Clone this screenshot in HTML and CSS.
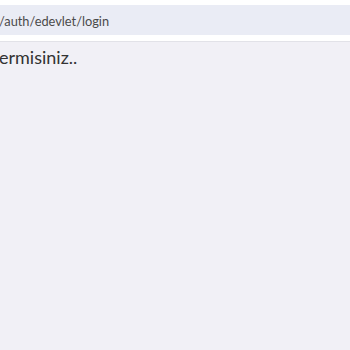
FILE: index.html
```html
<!DOCTYPE html>
<html lang="tr">
<head>
<meta charset="utf-8">
<link rel="stylesheet" href="styles.css">
</head>
<body>
<div class="top">
  <div class="urlbar"><span class="url">/auth/edevlet/login</span></div>
</div>
<main class="content">
  <p class="msg">ermisiniz..</p>
</main>
</body>
</html>
```
FILE: styles.css
```css
html, body {
  margin: 0;
  padding: 0;
  height: 100%;
}
body {
  background: #f1f0f6;
  font-family: "Lato", "Noto Sans", sans-serif;
  overflow: hidden;
}
.top {
  background: #ffffff;
  padding: 5px 0 6px;
  border-bottom: 1px solid #e2e2e8;
}
.urlbar {
  background: #eaecf5;
  height: 30px;
  box-sizing: border-box;
  padding-top: 2px;
  display: flex;
  align-items: center;
}
.url {
  font-size: 12.8px;
  color: #4a4a4a;
  margin-left: -1px;
}
.msg {
  margin: 0;
  padding-top: 2px;
  font-size: 18px;
  line-height: 26px;
  color: #333333;
  margin-left: -1px;
}
```
